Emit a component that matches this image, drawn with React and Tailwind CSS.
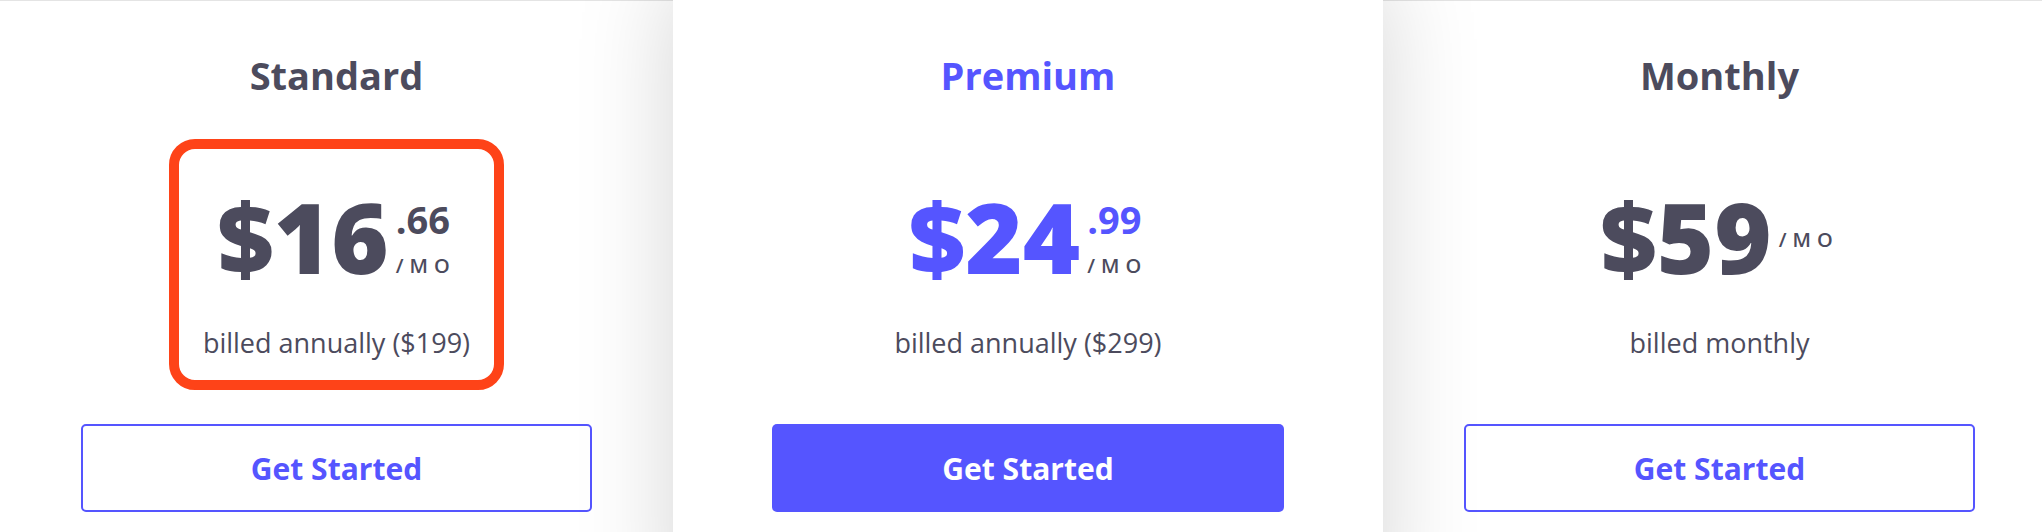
import React from 'react';

const plans = [
  { name: 'Standard', dollars: '$16', cents: '.66', note: 'billed annually ($199)', featured: false, highlight: true },
  { name: 'Premium', dollars: '$24', cents: '.99', note: 'billed annually ($299)', featured: true },
  { name: 'Monthly', dollars: '$59', cents: null, note: 'billed monthly', featured: false },
];

function Price({ plan }) {
  const color = plan.featured ? 'text-[#5555ff]' : 'text-[#4c4b5d]';
  return (
    <div className="flex items-start justify-center">
      <span className={`text-[98px] leading-none font-extrabold ${color}`}>{plan.dollars}</span>
      <div className="ml-[7px] flex flex-col items-start">
        {plan.cents ? (
          <>
            <span className={`mt-[13px] text-[38px] leading-none font-bold ${color}`}>{plan.cents}</span>
            <span className="mt-[18px] text-[20px] leading-none font-semibold tracking-[0.3em] text-[#4c4b5d]">/MO</span>
          </>
        ) : (
          <span className="mt-[43px] text-[20px] leading-none font-semibold tracking-[0.3em] text-[#4c4b5d]">/MO</span>
        )}
      </div>
    </div>
  );
}

function PlanCard({ plan }) {
  return (
    <div
      className={
        plan.featured
          ? 'relative z-10 -mt-[20px] h-[640px] w-[710px] shrink-0 bg-white px-[99px] pt-[76px] shadow-[0_0_90px_rgba(0,0,0,0.17)]'
          : 'h-[620px] w-[673px] shrink-0 border-t border-[#e4e4e4] bg-white px-[81px] pt-[55px]'
      }
    >
      {/* Title */}
      <h2
        className={`text-center text-[38px] leading-none font-bold ${
          plan.featured ? 'text-[#5555ff]' : 'text-[#4c4b5d]'
        }`}
      >
        {plan.name}
      </h2>

      {/* Price block */}
      <div
        className={`mx-auto mt-[55px] w-[315px] pt-[38px] pb-[24px] ${
          plan.highlight ? 'rounded-[16px] outline-[10px] outline-solid outline-[#fe4318]' : ''
        }`}
      >
        <Price plan={plan} />
        <p className="mt-[44px] text-center text-[27px] leading-none text-[#4c4b5d] whitespace-nowrap">{plan.note}</p>
      </div>

      {/* Button */}
      <button
        className={`mt-[44px] flex h-[88px] w-full items-center justify-center rounded-[5px] text-[30px] font-bold ${
          plan.featured
            ? 'bg-[#5555ff] text-white'
            : 'border-2 border-[#5555ff] bg-white text-[#5555ff]'
        }`}
      >
        Get Started
      </button>
    </div>
  );
}

export default function App() {
  return (
    <div className="h-[532px] w-full overflow-hidden bg-white font-['Open_Sans',sans-serif]">
      <div className="flex items-start">
        {plans.map((plan) => (
          <PlanCard key={plan.name} plan={plan} />
        ))}
      </div>
    </div>
  );
}
